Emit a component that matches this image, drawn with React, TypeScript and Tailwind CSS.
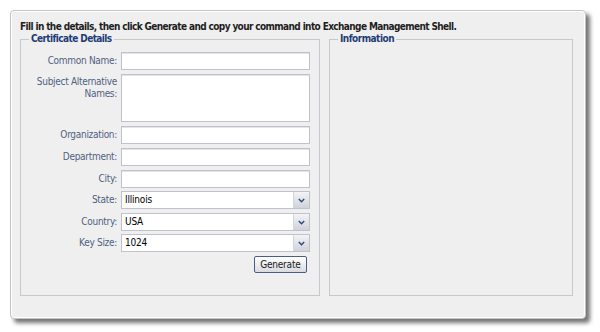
const font = "font-['Tahoma','DejaVu_Sans_Condensed','Liberation_Sans',sans-serif]";

function Label({ children }: { children: React.ReactNode }) {
  return (
    <div className="w-[96px] shrink-0 text-right text-[10px] leading-[12px] tracking-[-0.3px] text-[#4f5f82]">
      {children}
    </div>
  );
}

function TextRow({ label }: { label: string }) {
  return (
    <div className="flex items-center gap-[4px]">
      <Label>{label}</Label>
      <div className="w-[189px] h-[18px] bg-white border border-[#bfc2cc] shadow-[inset_0_1px_0_#e4e4e4]" />
    </div>
  );
}

function SelectRow({ label, value }: { label: string; value: string }) {
  return (
    <div className="flex items-center gap-[4px]">
      <Label>{label}</Label>
      <div className="w-[189px] h-[18px] bg-white border border-[#bfc2cc] flex items-center">
        <span className="flex-1 pl-[3px] text-[10px] leading-[12px] tracking-[-0.2px] text-black">{value}</span>
        <div className="w-[16px] h-full bg-gradient-to-b from-[#f4f4f6] to-[#cfd2da] border-l border-[#d4d6dc] flex items-center justify-center">
          <svg width="7" height="5" viewBox="0 0 7 5">
            <path d="M0.8 1 L3.5 3.8 L6.2 1" fill="none" stroke="#2f4778" strokeWidth="1.4" />
          </svg>
        </div>
      </div>
    </div>
  );
}

export default function App() {
  return (
    <div className={`w-[600px] h-[332px] bg-white overflow-hidden ${font}`}>
      <div className="ml-[10px] mt-[10px] w-[576px] h-[309px] rounded-[4px] border border-[#c4c4c4] bg-[#efefef] shadow-[inset_0_0_0_1px_#ffffff,4px_4px_4px_rgba(0,0,0,0.55)] pl-[9px] pr-[12px] pt-[9px]">
        <div className="text-[10px] leading-[13px] font-bold text-[#1e1e1e] tracking-[-0.62px]">
          Fill in the details, then click Generate and copy your command into Exchange Management Shell.
        </div>
        <div className="flex gap-[9px]">
          <fieldset className="w-[301px] h-[263px] border border-[#c6c8d0] px-0">
            <legend className="ml-[8px] px-[2px] text-[10px] leading-[12px] font-bold tracking-[-0.6px] text-[#1f3d76]">
              Certificate Details
            </legend>
            <div className="pt-[7px] flex flex-col">
              <TextRow label="Common Name:" />
              <div className="flex items-start gap-[4px] mt-[4px]">
                <Label>
                  <span className="block pt-[2px]">Subject Alternative Names:</span>
                </Label>
                <div className="w-[189px] h-[48px] bg-white border border-[#bfc2cc] shadow-[inset_0_1px_0_#e4e4e4]" />
              </div>
              <div className="mt-[4px]"><TextRow label="Organization:" /></div>
              <div className="mt-[4px]"><TextRow label="Department:" /></div>
              <div className="mt-[4px]"><TextRow label="City:" /></div>
              <div className="mt-[3px]"><SelectRow label="State:" value="Illinois" /></div>
              <div className="mt-[4px]"><SelectRow label="Country:" value="USA" /></div>
              <div className="mt-[3px]"><SelectRow label="Key Size:" value="1024" /></div>
              <div className="mt-[4px] flex justify-end pr-[12px]">
                <button className="w-[53px] h-[17px] rounded-[2px] border border-[#4a5d85] bg-gradient-to-b from-[#ffffff] to-[#d9dbe0] text-[10px] leading-[12px] tracking-[-0.2px] text-[#1a1a1a]">
                  Generate
                </button>
              </div>
            </div>
          </fieldset>
          <fieldset className="w-[245px] h-[263px] border border-[#c6c8d0] px-0">
            <legend className="ml-[8px] px-[2px] text-[10px] leading-[12px] font-bold tracking-[-0.5px] text-[#1f3d76]">
              Information
            </legend>
          </fieldset>
        </div>
      </div>
    </div>
  );
}
